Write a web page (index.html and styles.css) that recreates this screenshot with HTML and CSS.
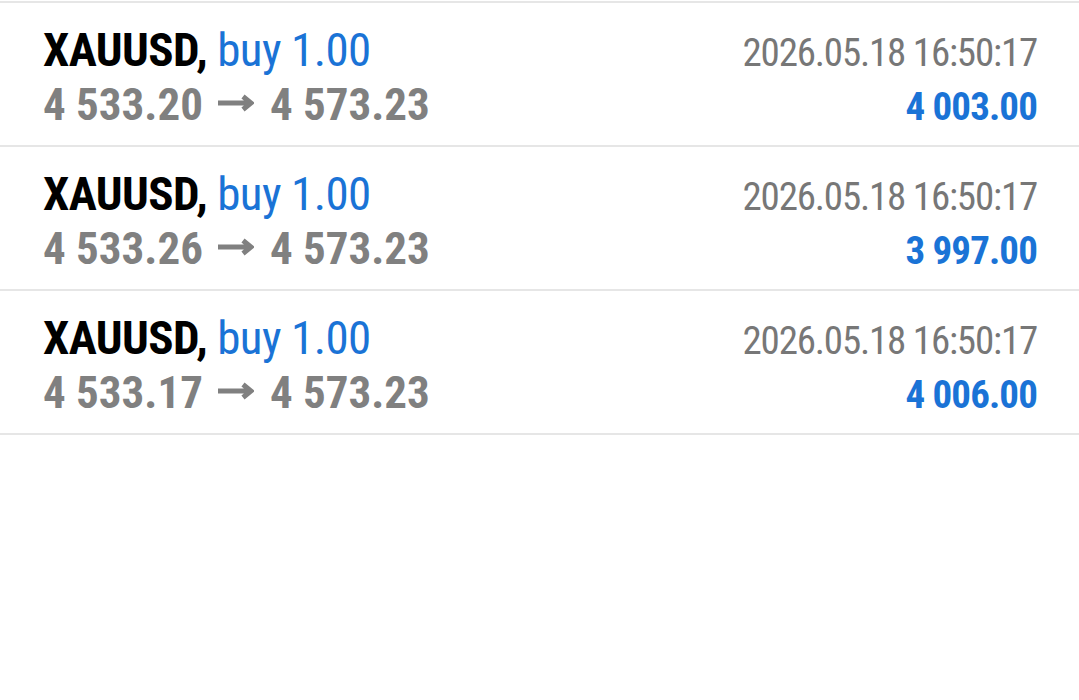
FILE: index.html
```html
<!DOCTYPE html>
<html>
<head>
    <title>History</title>
    <link rel="stylesheet" href="styles.css">
</head>
<body>
    <div class="deals">
        <div class="deal">
            <div class="line">
                <div class="title"><span class="symbol">XAUUSD,</span> <span class="side">buy 1.00</span></div>
                <div class="time">2026.05.18 16:50:17</div>
            </div>
            <div class="line">
                <div class="prices">4 533.20<svg class="arrow" width="36" height="18" viewBox="0 0 36 18"><path d="M0 9H32M25 2.5L33 9L25 15.5" fill="none" stroke="#808080" stroke-width="5"/></svg>4 573.23</div>
                <div class="profit">4 003.00</div>
            </div>
        </div>
        <div class="deal">
            <div class="line">
                <div class="title"><span class="symbol">XAUUSD,</span> <span class="side">buy 1.00</span></div>
                <div class="time">2026.05.18 16:50:17</div>
            </div>
            <div class="line">
                <div class="prices">4 533.26<svg class="arrow" width="36" height="18" viewBox="0 0 36 18"><path d="M0 9H32M25 2.5L33 9L25 15.5" fill="none" stroke="#808080" stroke-width="5"/></svg>4 573.23</div>
                <div class="profit">3 997.00</div>
            </div>
        </div>
        <div class="deal">
            <div class="line">
                <div class="title"><span class="symbol">XAUUSD,</span> <span class="side">buy 1.00</span></div>
                <div class="time">2026.05.18 16:50:17</div>
            </div>
            <div class="line">
                <div class="prices">4 533.17<svg class="arrow" width="36" height="18" viewBox="0 0 36 18"><path d="M0 9H32M25 2.5L33 9L25 15.5" fill="none" stroke="#808080" stroke-width="5"/></svg>4 573.23</div>
                <div class="profit">4 006.00</div>
            </div>
        </div>
    </div>
</body>
</html>
```

FILE: styles.css
```css
body {
  margin: 0;
  background: #fff;
  font-family: "Roboto Condensed", "Liberation Sans Narrow", Roboto, sans-serif;
}
.deals {
  padding-top: 1px;
}
.deal {
  border-top: 2px solid #e6e6e6;
  padding: 21px 42px 12px 43px;
}
.deal:last-child {
  border-bottom: 2px solid #e6e6e6;
}
.line {
  display: flex;
  justify-content: space-between;
  align-items: baseline;
  line-height: 51px;
}
.title {
  font-size: 47px;
  letter-spacing: -0.6px;
}
.symbol {
  font-weight: bold;
  color: #000;
}
.side {
  color: #1a73d6;
}
.prices {
  font-size: 45px;
  font-weight: bold;
  color: #808080;
}
.arrow {
  vertical-align: 8px;
  margin: 0 16px 0 15px;
}
.time {
  font-size: 39px;
  letter-spacing: -1.2px;
  color: #777;
}
.profit {
  font-size: 39px;
  letter-spacing: -0.9px;
  font-weight: bold;
  color: #1a73d6;
}
```
